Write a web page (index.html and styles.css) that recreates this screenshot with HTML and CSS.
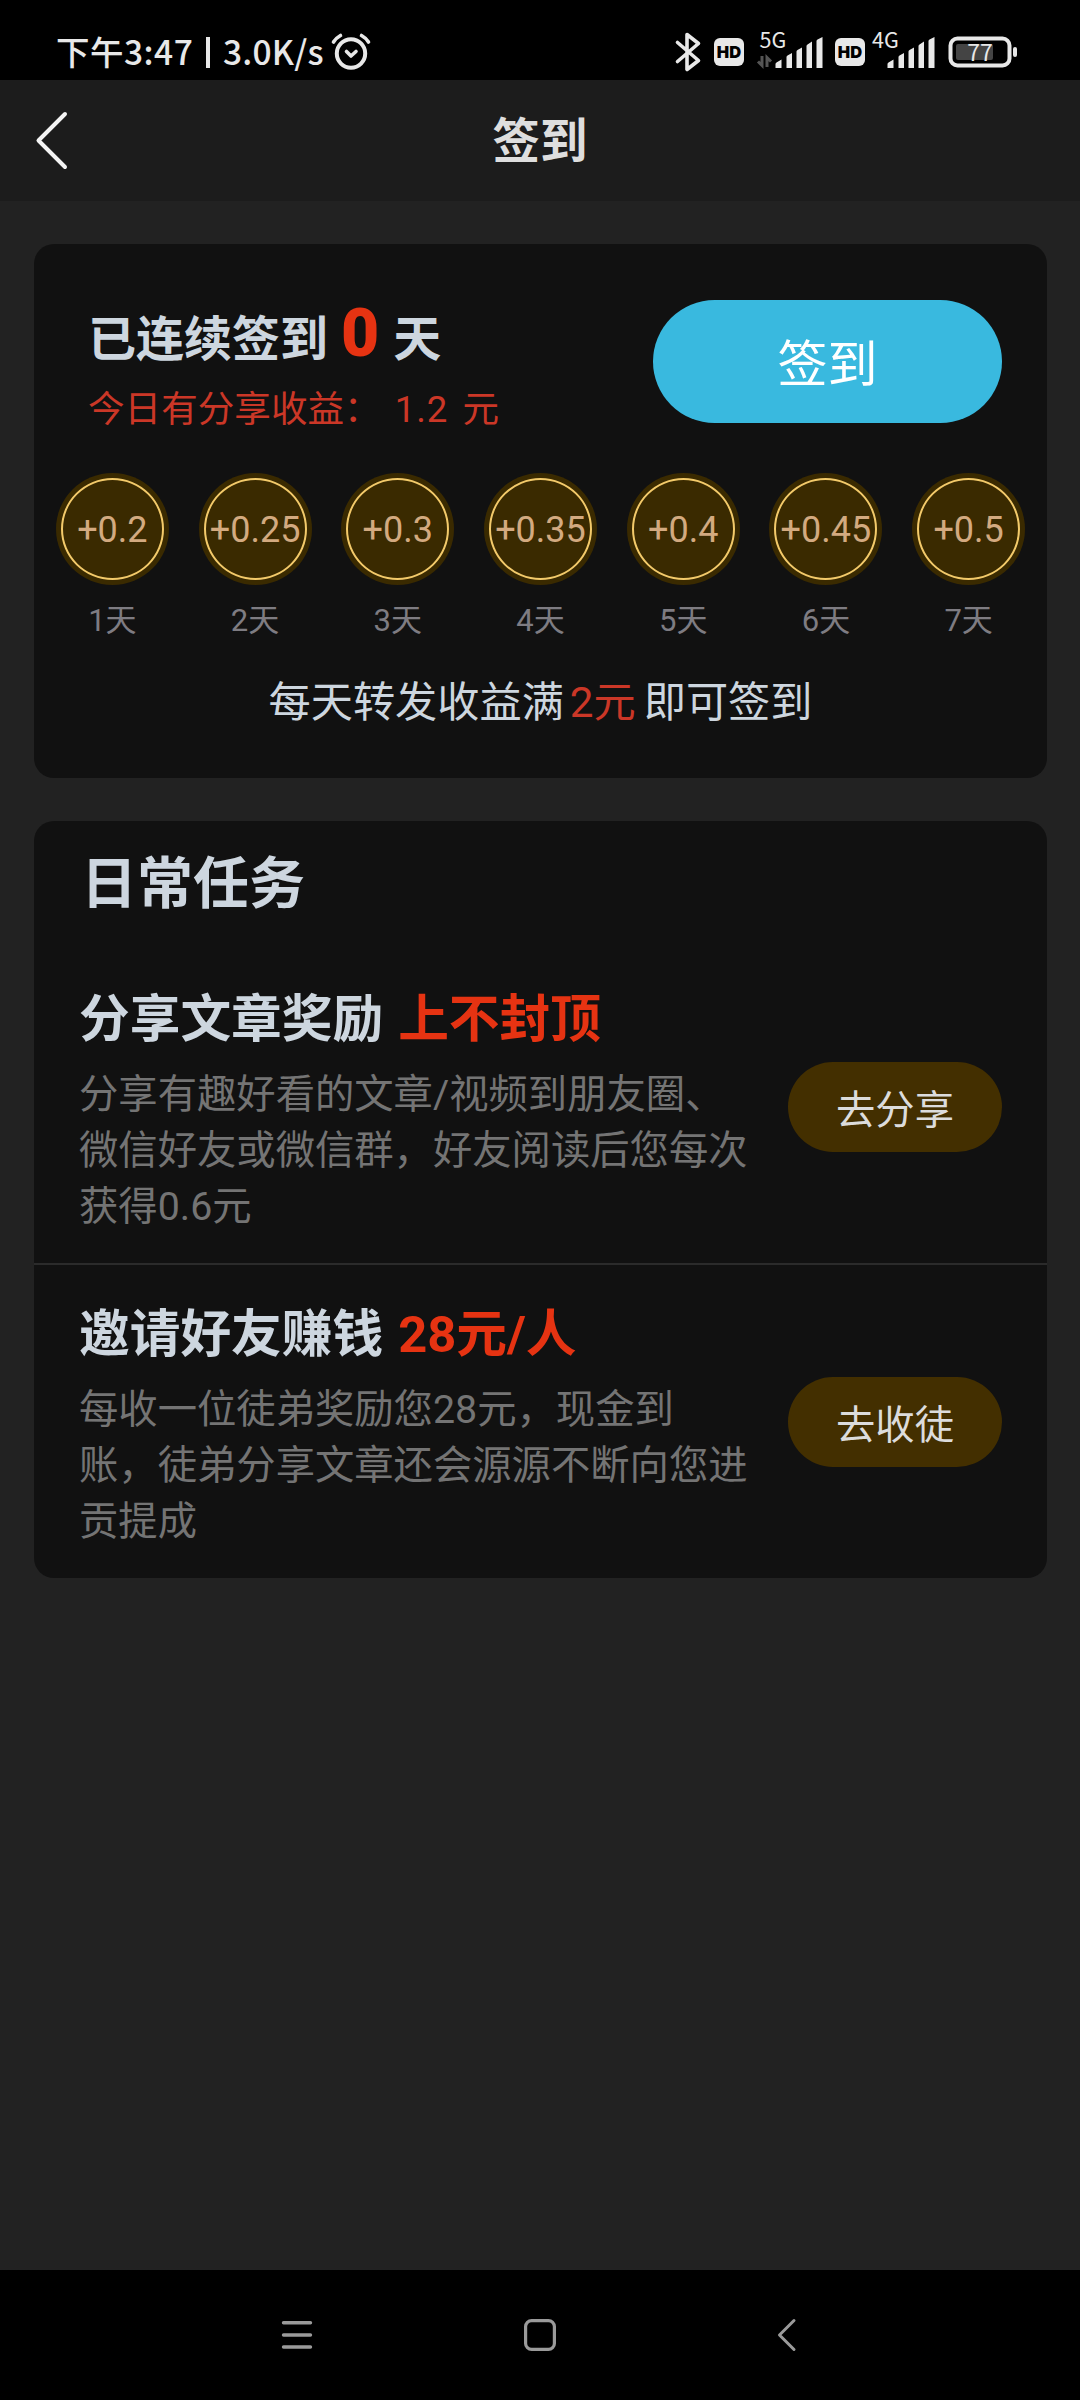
FILE: index.html
```html
<!DOCTYPE html>
<html lang="zh-CN">
<head>
<meta charset="utf-8">
<title>签到</title>
<link rel="stylesheet" href="styles.css">
</head>
<body>
<div class="status">
  <div class="status-left">
    <span class="clock">下午3:47</span><i class="sep"></i><span class="speed">3.0K/s</span>
    <svg class="alarm" width="42" height="40" viewBox="0 0 42 40" fill="none" stroke="#e8e8e8" stroke-linecap="round">
      <circle cx="21" cy="21.5" r="14.2" stroke-width="4"/>
      <path d="M16.500 19.500l4.500 4.500 5-4.500" stroke-width="3.600" stroke-linejoin="round"/>
      <path d="M3.500 10Q6 6 10.500 3.500M31.500 3.500Q36 6 38.500 10" stroke-width="3.6"/>
    </svg>
  </div>
  <svg class="status-icons" width="350" height="70" viewBox="670 10 350 70">
    <path d="M677.500 42.500l21 18-11.500 9V34.500l11.500 9-21 18" fill="none" stroke="#e8e8e8" stroke-width="3.600" stroke-linecap="round" stroke-linejoin="round"/>
    <g fill="#e8e8e8">
      <rect x="714" y="38" width="30" height="28" rx="6"/>
      <rect x="835" y="38" width="30" height="28" rx="6"/>
      <path id="bars" d="M775.500 68v-4q0-1 1-1.500l5-3v8.500zM786.500 68V57q0-1 1-1.500l4.500-2.500V68zM796.500 68V51.500q0-1 1-1.500l4.500-2.500V68zM806.500 68V46q0-1 1-1.500l4.500-3V68zM816.500 68V41q0-1 1-1.500l5-2.500V68z"/>
      <use href="#bars" x="112"/>
      <rect x="1013" y="47" width="4" height="10" rx="2"/>
    </g>
    <g class="hd" text-anchor="middle"><text x="729" y="57.500">HD</text><text x="850" y="57.500">HD</text></g>
    <g class="net"><text x="759.500" y="48">5G</text><text x="872" y="48">4G</text></g>
    <path d="M762 56v9.500l-4-4M767 67v-9.500l4 4" fill="none" stroke="#555" stroke-width="3"/>
    <rect x="956" y="44" width="37" height="16" rx="2" fill="#444"/>
    <rect x="950.500" y="38.500" width="59" height="27" rx="7" fill="none" stroke="#e8e8e8" stroke-width="4"/>
    <text class="pct" x="980" y="60.500" text-anchor="middle">77</text>
  </svg>
</div>
<header class="bar">
  <svg class="back" width="34" height="60" viewBox="0 0 34 60" fill="none" stroke="#f4f4f4" stroke-width="4" stroke-linecap="round" stroke-linejoin="round"><path d="M30 3L3.500 29.500 30 56"/></svg>
  <h1>签到</h1>
</header>
<main>
  <section class="card sign">
    <div class="top">
      <div class="info">
        <div class="streak">已连续签到<b>0</b>天</div>
        <div class="today">今日有分享收益：<span class="amount">1.2</span>元</div>
      </div>
      <button class="sign-btn">签到</button>
    </div>
    <ul class="days">
      <li><div class="coin"><span>+0.2</span></div><p>1天</p></li>
      <li><div class="coin"><span>+0.25</span></div><p>2天</p></li>
      <li><div class="coin"><span>+0.3</span></div><p>3天</p></li>
      <li><div class="coin"><span>+0.35</span></div><p>4天</p></li>
      <li><div class="coin"><span>+0.4</span></div><p>5天</p></li>
      <li><div class="coin"><span>+0.45</span></div><p>6天</p></li>
      <li><div class="coin"><span>+0.5</span></div><p>7天</p></li>
    </ul>
    <div class="hint">每天转发收益满<em>2元</em>即可签到</div>
  </section>
  <section class="card tasks">
    <h2>日常任务</h2>
    <div class="task">
      <div class="body">
        <h3>分享文章奖励<em>上不封顶</em></h3>
        <p>分享有趣好看的文章/视频到朋友圈、<br>微信好友或微信群，好友阅读后您每次<br>获得0.6元</p>
      </div>
      <button class="go">去分享</button>
    </div>
    <div class="task">
      <div class="body">
        <h3>邀请好友赚钱<em>28元/人</em></h3>
        <p>每收一位徒弟奖励您28元，现金到<br>账，徒弟分享文章还会源源不断向您进<br>贡提成</p>
      </div>
      <button class="go">去收徒</button>
    </div>
  </section>
</main>
<nav class="nav">
  <svg width="34" height="36" viewBox="0 0 34 36" stroke="#9a9a9a" stroke-width="3.400" stroke-linecap="round"><path d="M3.500 5.800h27M3.500 18h27M3.500 30h27"/></svg>
  <svg width="34" height="36" viewBox="0 0 34 36" fill="none" stroke="#9a9a9a" stroke-width="3.200"><rect x="2.600" y="3.600" width="28.800" height="28.800" rx="6"/></svg>
  <svg width="34" height="36" viewBox="0 0 34 36" fill="none" stroke="#9a9a9a" stroke-width="3" stroke-linecap="round" stroke-linejoin="round"><path d="M28 3.500L13.500 18 28 32.500"/></svg>
</nav>
</body>
</html>
```
FILE: styles.css
```css
* { box-sizing: border-box; margin: 0; padding: 0; }
body {
  width: 1080px;
  height: 2400px;
  display: flex;
  flex-direction: column;
  background: #222;
  color: #cdd6df;
  font-family: Roboto, "Noto Sans CJK SC", sans-serif;
  white-space: nowrap;
  overflow: hidden;
}
button { border: 0; font-family: inherit; }
em { font-style: normal; }

.status {
  height: 80px;
  flex: none;
  background: #000;
  color: #e8e8e8;
  display: flex;
  justify-content: space-between;
  padding: 10px 60px 0 56px;
}
.status-left {
  display: flex;
  height: 50px;
  margin-top: 17px;
  align-items: center;
  font: 500 33.500px/48px "Noto Sans CJK SC", sans-serif;
}
.clock { width: 150px; letter-spacing: .5px; }
.sep { width: 4px; height: 31px; background: #e8e8e8; }
.speed { width: 106px; margin-left: 13px; margin-right: 1px; letter-spacing: .2px; }
.clock, .speed { margin-top: -2px; }
.alarm { margin-bottom: 1px; }
.hd { font: 900 16.500px Inter, sans-serif; fill: #000; }
.net { font: 400 21.500px "Noto Sans CJK SC", sans-serif; fill: #e8e8e8; }
.pct { font: 400 23px "Noto Sans CJK SC", sans-serif; fill: #e8e8e8; }

.bar {
  height: 121px;
  flex: none;
  background: #1c1c1c;
  display: grid;
  grid-template-columns: 120px 1fr 120px;
  align-items: center;
}
.back { margin-left: 35px; }
h1 { text-align: center; font-size: 47.500px; line-height: 70px; padding-top: 3px; font-weight: 600; color: #dedede; }

main { flex: 1; padding: 43px 33px 0 34px; display: flex; flex-direction: column; gap: 43px; }
.card { background: #111; border-radius: 20px; }

.sign { height: 534px; padding: 56px 7px 0; }
.top { display: flex; justify-content: space-between; padding: 0 38px 0 47px; height: 134px; }
.info { padding-top: 4px; }
.streak { font-size: 48px; line-height: 72px; font-weight: 700; }
.streak b { font-size: 66px; line-height: 0; color: #e63312; margin: 0 14px 0 13px; }
.today { font-size: 36.600px; line-height: 50px; margin-top: 9px; color: #cb3727; }
.amount { letter-spacing: 1px; margin: 0 14px 0 14px; }
.sign-btn { width: 349px; height: 123px; border-radius: 62px; background: #39b9df; color: #fff; font-size: 50px; line-height: 123px; padding-top: 4px; }

.days { list-style: none; display: grid; grid-template-columns: repeat(7, 1fr); margin-top: 39px; }
.days li { display: flex; flex-direction: column; align-items: center; }
.coin { width: 113px; height: 112px; border-radius: 50%; background: #3a2a00; padding: 5px; display: flex; }
.coin span {
  flex: 1;
  border: 2px solid #f3ca6a;
  border-radius: 50%;
  display: flex;
  align-items: center;
  justify-content: center;
  font-size: 36px;
  line-height: 42px;
  padding-top: 1px;
  color: #d3aa80;
}
.days p { margin-top: 16px; font-size: 31px; line-height: 40px; color: #7e7c82; }
.hint { margin-top: 32px; font-size: 42.200px; line-height: 60px; text-align: center; }
.hint em { color: #cb3727; margin: 0 8px 0 6px; }

.tasks { height: 757px; padding-top: 23px; }
h2 { font-size: 56px; line-height: 80px; padding-left: 47px; margin-bottom: 26px; }
.task { display: flex; justify-content: space-between; padding: 35px 45px 28px 45px; }
.task + .task { border-top: 2px solid #2b2b2b; }
h3 { font-size: 50.700px; line-height: 70px; }
h3 em { color: #e63312; margin-left: 15px; }
.body p { margin-top: 12px; font-size: 39.350px; line-height: 56px; color: #747474; }
.go { width: 214px; height: 90px; margin-top: 77px; border-radius: 45px; background: #432f00; color: #dcdcdc; font-size: 39.300px; line-height: 90px; padding-top: 4px; }

.nav { height: 130px; flex: none; background: #000; display: flex; justify-content: center; align-items: center; gap: 209px; }
```
